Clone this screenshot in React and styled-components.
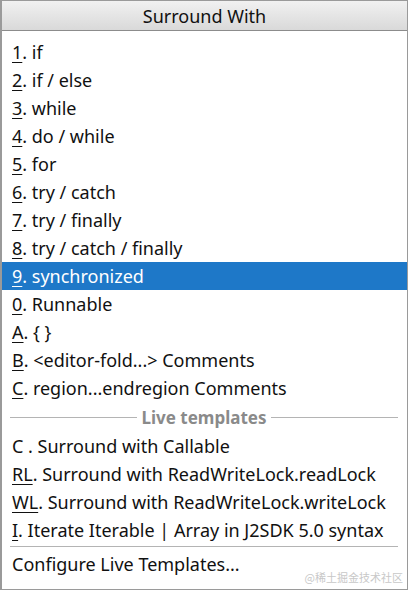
import React from 'react';
import styled, { createGlobalStyle } from 'styled-components';

const GlobalStyle = createGlobalStyle`
  html, body { margin: 0; padding: 0; background: #fff; }
  body { font-family: "Noto Sans", "Liberation Sans", sans-serif; }
`;

const Popup = styled.div`
  width: 408px;
  height: 590px;
  box-sizing: border-box;
  border: 1px solid #9a9a9a;
  border-left-width: 2px;
  background: #fff;
  display: flex;
  flex-direction: column;
  position: relative;
  overflow: hidden;
`;

const Title = styled.div`
  height: 29px;
  flex: none;
  display: flex;
  align-items: center;
  justify-content: center;
  background: linear-gradient(#f1f1f1, #d9d9d9);
  border-bottom: 1px solid #8c8c8c;
  font-size: 18px;
  color: #111;
`;

const List = styled.div`
  padding-top: 7px;
  display: flex;
  flex-direction: column;
`;

const Row = styled.div`
  height: 28px;
  display: flex;
  align-items: center;
  padding-left: 10px;
  font-size: 18px;
  white-space: nowrap;
  color: ${p => (p.$selected ? '#fff' : '#111')};
  background: ${p => (p.$selected ? '#1e78c8' : 'transparent')};
`;

const Key = styled.span`
  text-decoration: underline;
  text-underline-offset: 3px;
  text-decoration-thickness: 1px;
`;

const Group = styled.div`
  height: 30px;
  display: flex;
  align-items: center;
  gap: 4px;
  padding: 0 9px 0 8px;
  font-size: 17px;
  font-weight: bold;
  color: #8a8a8a;
  &::before, &::after {
    content: '';
    flex: 1;
    height: 1px;
    background: #b4b4b4;
  }
`;

const Divider = styled.div`
  height: 1px;
  background: #b4b4b4;
  margin: 2px 9px 3px 8px;
`;

const Watermark = styled.div`
  position: absolute;
  right: 4px;
  bottom: 4px;
  font-size: 11px;
  color: #c8c8c8;
  font-family: "Noto Sans CJK SC", sans-serif;
`;

const items = [
  ['1', '. if'],
  ['2', '. if / else'],
  ['3', '. while'],
  ['4', '. do / while'],
  ['5', '. for'],
  ['6', '. try / catch'],
  ['7', '. try / finally'],
  ['8', '. try / catch / finally'],
  ['9', '. synchronized', true],
  ['0', '. Runnable'],
  ['A', '. { }'],
  ['B', '. <editor-fold...> Comments'],
  ['C', '. region...endregion Comments'],
];

const templates = [
  ['', 'C . Surround with Callable'],
  ['RL', '. Surround with ReadWriteLock.readLock'],
  ['WL', '. Surround with ReadWriteLock.writeLock'],
  ['I', '. Iterate Iterable | Array in J2SDK 5.0 syntax'],
];

export default function App() {
  return (
    <>
      <GlobalStyle />
      <Popup>
        <Title>Surround With</Title>
        <List>
          {items.map(([k, t, sel]) => (
            <Row key={k + t} $selected={sel}>
              <Key>{k}</Key>{t}
            </Row>
          ))}
          <Group>Live templates</Group>
          {templates.map(([k, t]) => (
            <Row key={k + t}>
              {k && <Key>{k}</Key>}{t}
            </Row>
          ))}
          <Divider />
          <Row>Configure Live Templates...</Row>
        </List>
        <Watermark>@稀土掘金技术社区</Watermark>
      </Popup>
    </>
  );
}
